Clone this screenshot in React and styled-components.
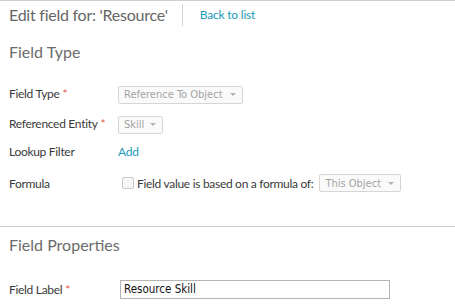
import React from "react";
import styled, { createGlobalStyle } from "styled-components";

const Global = createGlobalStyle`
  html, body { margin: 0; padding: 0; background: #fff; }
  body { font-family: Lato, "Noto Sans", sans-serif; }
`;

const Page = styled.div`
  width: 455px;
  height: 305px;
  border-top: 1px solid #cfcfcf;
  box-sizing: border-box;
  overflow: hidden;
`;

const Header = styled.div`
  display: flex;
  align-items: center;
  height: 27px;
  padding-left: 9px;
`;

const Title = styled.div`
  font-size: 16px;
  color: #666;
  letter-spacing: -0.25px;
  white-space: nowrap;
`;

const VDivider = styled.div`
  width: 1px;
  height: 22px;
  background: #d4d4d4;
  margin: 0 17px 0 14px;
`;

const Link = styled.a`
  color: #1b9ab6;
  font-size: 12px;
  letter-spacing: -0.2px;
  text-decoration: none;
  cursor: pointer;
`;

const SectionTitle = styled.div`
  font-size: 16px;
  line-height: 20px;
  color: #6b6b6b;
  padding: ${(p) => p.$top}px 0 ${(p) => p.$bottom}px 9px;
`;

const Row = styled.div`
  display: grid;
  grid-template-columns: 109px 1fr;
  align-items: center;
  height: ${(p) => p.$h}px;
  padding-left: 9px;
`;

const Label = styled.div`
  font-size: 12px;
  letter-spacing: -0.3px;
  color: #3a3a3a;
  white-space: nowrap;
`;

const Star = styled.span`
  color: #e2574c;
  margin-left: 3px;
  font-size: 12px;
`;

const Select = styled.div`
  display: inline-flex;
  align-items: center;
  justify-content: space-between;
  box-sizing: border-box;
  height: 18px;
  width: ${(p) => p.$w}px;
  padding: 0 6px 0 5px;
  border: 1px solid #d6d6d6;
  border-radius: 2px;
  background: #fafafa;
  color: #a4a4a4;
  font-family: "DejaVu Sans Condensed", "DejaVu Sans", sans-serif;
  font-size: 11px;
  white-space: nowrap;
`;

const Caret = styled.span`
  flex: none;
  width: 0;
  height: 0;
  border-left: 3px solid transparent;
  border-right: 3px solid transparent;
  border-top: 3px solid #b3b3b3;
  margin-left: 6px;
`;

const Inline = styled.div`
  display: flex;
  align-items: center;
`;

const Checkbox = styled.span`
  display: inline-block;
  flex: none;
  box-sizing: border-box;
  width: 12px;
  height: 12px;
  border: 1px solid #c9c9c9;
  border-radius: 2px;
  background: #f6f6f6;
  margin-left: 4px;
  margin-right: 3px;
`;

const CheckText = styled.span`
  font-size: 12px;
  letter-spacing: -0.3px;
  color: #3a3a3a;
  margin-right: 6px;
  white-space: nowrap;
`;

const HDivider = styled.div`
  height: 1px;
  background: #cfcfcf;
  margin-top: ${(p) => p.$top}px;
`;

const Input = styled.input`
  box-sizing: border-box;
  width: 270px;
  height: 19px;
  margin: 0 0 0 2px;
  border: 1px solid #b5b5b5;
  padding: 0 3px;
  font-family: "DejaVu Sans Condensed", "DejaVu Sans", sans-serif;
  font-size: 11.5px;
  color: #111;
  outline: none;
`;

export default function App() {
  return (
    <Page>
      <Global />
      <Header>
        <Title>Edit field for: 'Resource'</Title>
        <VDivider />
        <Link>Back to list</Link>
      </Header>
      <SectionTitle $top={14} $bottom={16}>Field Type</SectionTitle>
      <Row $h={30}>
        <Label>Field Type<Star>*</Star></Label>
        <div><Select $w={125}>Reference To Object<Caret /></Select></div>
      </Row>
      <Row $h={30}>
        <Label>Referenced Entity<Star>*</Star></Label>
        <div><Select $w={45}>Skill<Caret /></Select></div>
      </Row>
      <Row $h={26}>
        <Label>Lookup Filter</Label>
        <Link>Add</Link>
      </Row>
      <Row $h={38}>
        <Label>Formula</Label>
        <Inline>
          <Checkbox />
          <CheckText>Field value is based on a formula of:</CheckText>
          <Select $w={82}>This Object<Caret /></Select>
        </Inline>
      </Row>
      <HDivider $top={24} />
      <SectionTitle $top={8} $bottom={8}>Field Properties</SectionTitle>
      <Row $h={52}>
        <Label>Field Label<Star>*</Star></Label>
        <Input defaultValue="Resource Skill" />
      </Row>
    </Page>
  );
}
